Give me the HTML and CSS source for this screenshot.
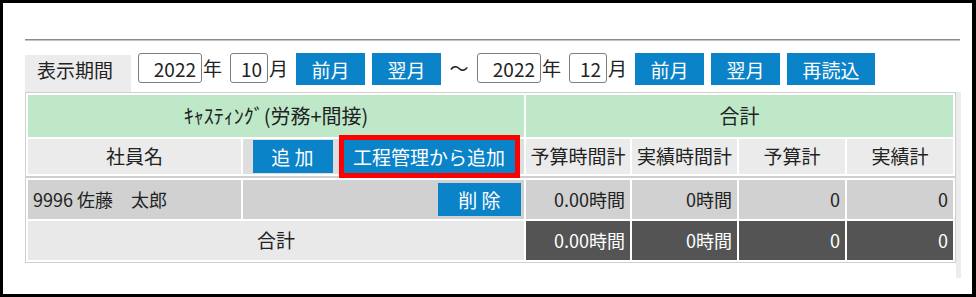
FILE: index.html
```html
<!DOCTYPE html>
<html lang="ja">

<head>
  <meta charset="UTF-8">
  <meta name="viewport" content="width=device-width, initial-scale=1.0">
  <title>キャスティング 集計</title>
  <link rel="stylesheet" href="styles.css">
</head>

<body>
  <div class="frame">
    <div class="rule"></div>

    <div class="toolbar">
      <span class="period-label">表示期間</span>
      <span class="field"><input class="year" type="text" value="2022"><span class="unit">年</span></span>
      <span class="field"><input class="month" type="text" value="10"><span class="unit">月</span></span>
      <button class="btn btn-month">前月</button>
      <button class="btn btn-month">翌月</button>
      <span class="tilde">～</span>
      <span class="field"><input class="year" type="text" value="2022"><span class="unit">年</span></span>
      <span class="field"><input class="month" type="text" value="12"><span class="unit">月</span></span>
      <button class="btn btn-month">前月</button>
      <button class="btn btn-month">翌月</button>
      <button class="btn btn-reload">再読込</button>
    </div>

    <div class="grid-wrap">
      <div class="grid">
        <table class="grid-head">
          <colgroup>
            <col style="width:213px">
            <col style="width:281px">
            <col style="width:104px">
            <col style="width:105px">
            <col style="width:106px">
            <col style="width:106px">
          </colgroup>
          <tr class="group">
            <th colspan="2">ｷｬｽﾃｨﾝｸﾞ(労務+間接)</th>
            <th colspan="4">合計</th>
          </tr>
          <tr class="labels">
            <th>社員名</th>
            <th class="actions">
              <div class="actions-inner">
                <button class="btn btn-add">追 加</button>
                <button class="btn btn-import">工程管理から追加</button>
              </div>
            </th>
            <th>予算時間計</th>
            <th>実績時間計</th>
            <th>予算計</th>
            <th>実績計</th>
          </tr>
        </table>

        <table class="grid-body">
          <colgroup>
            <col style="width:213px">
            <col style="width:281px">
            <col style="width:104px">
            <col style="width:105px">
            <col style="width:106px">
            <col style="width:106px">
          </colgroup>
          <tr class="row-data">
            <td class="name">9996 佐藤　太郎</td>
            <td class="remove"><button class="btn btn-remove">削 除</button></td>
            <td>0.00時間</td>
            <td>0時間</td>
            <td>0</td>
            <td>0</td>
          </tr>
          <tr class="row-total">
            <td class="label" colspan="2">合計</td>
            <td class="dark">0.00時間</td>
            <td class="dark">0時間</td>
            <td class="dark">0</td>
            <td class="dark">0</td>
          </tr>
        </table>
      </div>
      <div class="scroll-strip"></div>
    </div>
  </div>
</body>

</html>
```

FILE: styles.css
```css
* {
  box-sizing: border-box;
}

body {
  margin: 0;
  font-family: "Noto Sans CJK JP", "Noto Sans", sans-serif;
  color: #222;
  background: #fff;
}

.frame {
  width: 976px;
  height: 297px;
  border: 3px solid #000;
  border-right-width: 4px;
  padding-left: 22px;
  overflow: hidden;
}

.rule {
  width: 935px;
  margin-top: 36px;
  border-top: 1px solid #8c8c8c;
  border-bottom: 1px solid #c4c4c4;
}

/* period selector */
.toolbar {
  display: flex;
  align-items: flex-start;
  gap: 7px;
  height: 39px;
  margin-top: 12px;
  font-size: 19px;
  line-height: 1.2;
}

.period-label {
  width: 106px;
  height: 37px;
  margin-top: 2px;
  padding: 4px 0 0 12px;
  background: #ececec;
}

.field {
  display: flex;
  align-items: center;
  gap: 1px;
  height: 30px;
}

.field input {
  height: 30px;
  padding: 0 5px;
  font-family: inherit;
  font-size: 19px;
  color: #222;
  text-align: right;
  border: 1px solid #7f7f7f;
  border-radius: 3px;
}

.field .year {
  width: 64px;
}

.field .month {
  width: 38px;
}

.unit {
  width: 20px;
}

.tilde {
  width: 22px;
  line-height: 30px;
  text-align: center;
}

.btn {
  height: 32px;
  padding: 0;
  font-family: inherit;
  font-size: 19px;
  color: #fff;
  background: #0b83c8;
  border: none;
  cursor: pointer;
}

.btn-month {
  width: 69px;
}

.btn-reload {
  width: 88px;
}

/* grid */
.grid-wrap {
  display: flex;
  align-items: flex-start;
}

.grid {
  width: 931px;
}

.grid table {
  width: 931px;
  table-layout: fixed;
  border-collapse: separate;
  border-spacing: 2px;
  border: 1px solid #cfcfcf;
  font-size: 19px;
  line-height: 1.2;
}

.grid th {
  padding: 0;
  font-weight: normal;
}

.group th {
  height: 42px;
  font-size: 20px;
  background: #bee8c8;
}

.labels th {
  height: 35px;
  background: #ebebeb;
}

.labels .actions {
  background: #dedede;
}

.actions-inner {
  display: flex;
  justify-content: center;
  gap: 11px;
}

.btn-add {
  width: 80px;
  height: 33px;
}

.btn-import {
  width: 171px;
  height: 33px;
  outline: 5px solid #f00;
}

.grid td {
  height: 39px;
  padding: 0 5px;
  font-size: 18px;
  text-align: right;
}

.row-data td {
  background: #d1d1d1;
}

.row-data .name {
  text-align: left;
}

.row-data .remove {
  padding-right: 3px;
}

.btn-remove {
  width: 83px;
  height: 33px;
  vertical-align: middle;
}

.row-total .label {
  text-align: center;
  font-size: 19px;
  background: #e9e9e9;
}

.row-total .dark {
  color: #fff;
  background: #545454;
}

.scroll-strip {
  width: 5px;
  height: 186px;
  background: #ececec;
}
```
